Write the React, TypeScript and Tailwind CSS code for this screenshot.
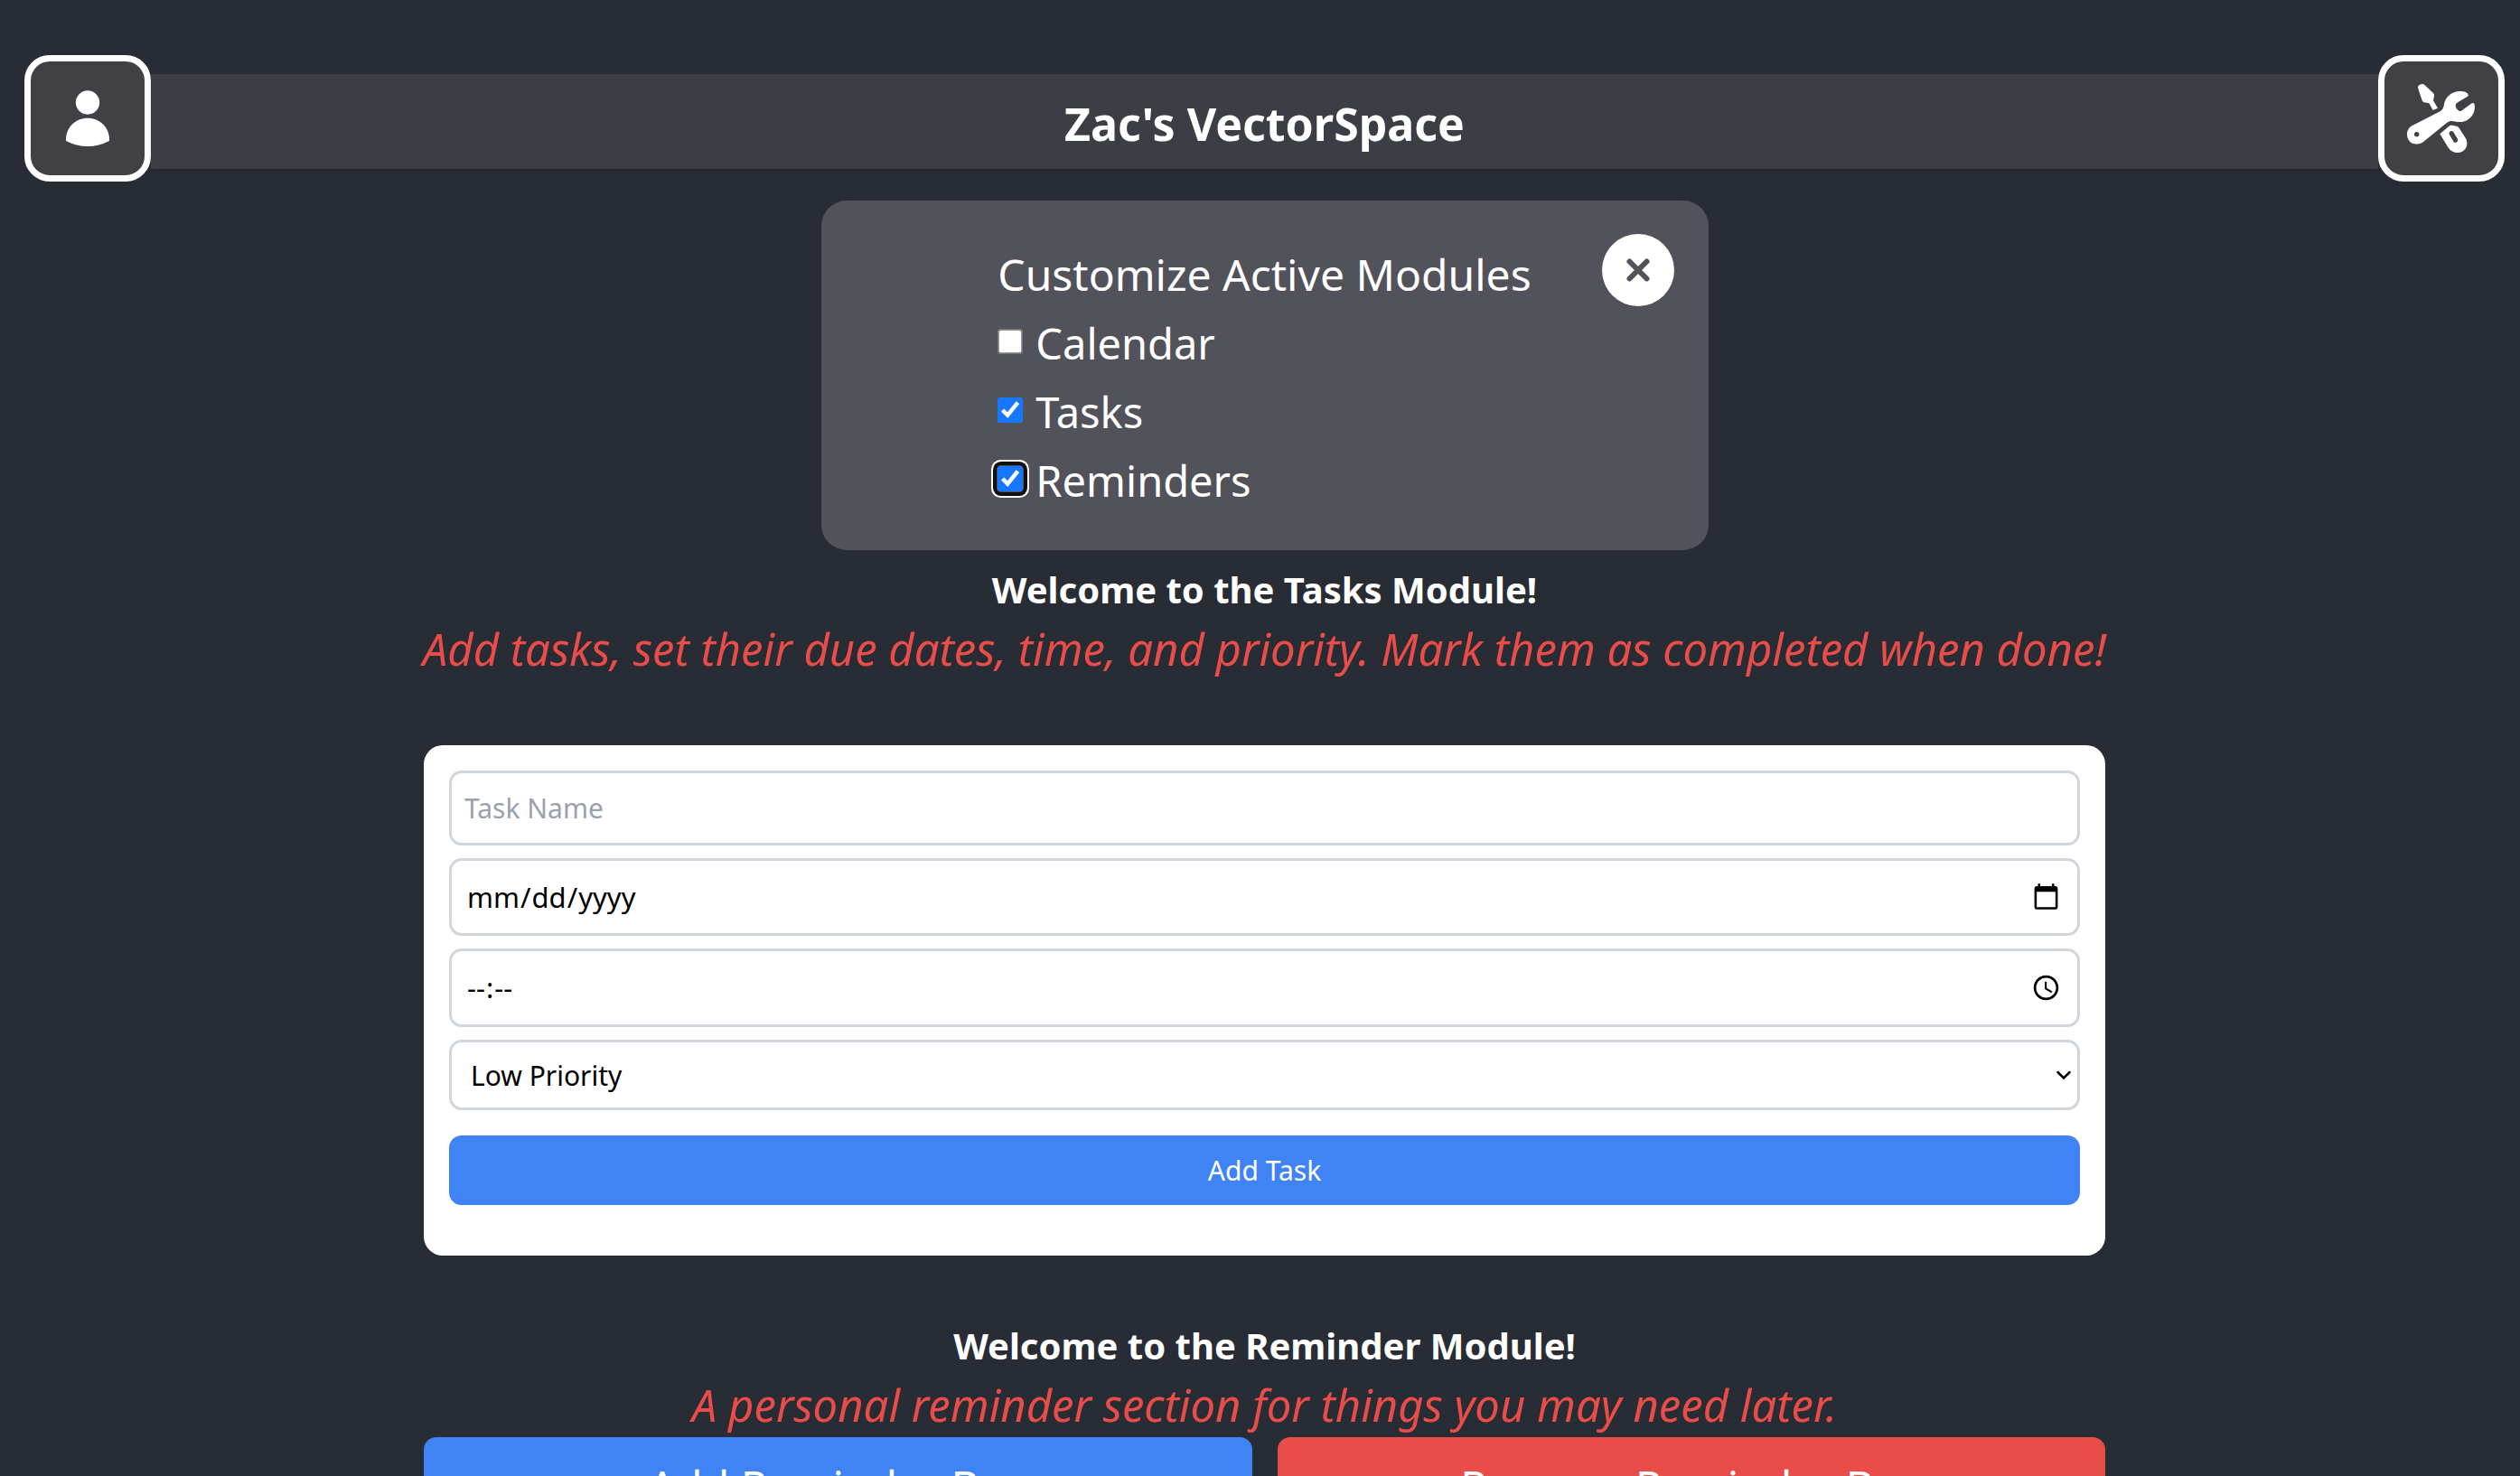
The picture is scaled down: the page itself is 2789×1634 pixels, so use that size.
import { useState } from "react";

const fieldClass =
  "block w-full rounded-[14px] border-[3px] border-gray-300 bg-white text-black placeholder:text-gray-400";

const pickerClass =
  "[&::-webkit-calendar-picker-indicator]:m-0 [&::-webkit-calendar-picker-indicator]:size-[33px] [&::-webkit-calendar-picker-indicator]:p-[2px]";

function UserIcon() {
  return (
    <svg viewBox="171 153 240 240" className="size-20" fill="currentColor" aria-hidden="true">
      <circle cx="291" cy="220.5" r="39.5" />
      <path d="M219 348v-5c0-40 32-71 72-71s72 31 72 71v5Q328 366 291 366 254 366 219 348Z" />
    </svg>
  );
}

function ToolsIcon() {
  return (
    <svg viewBox="66 33 240 240" className="size-20" fill="currentColor" fillRule="evenodd" aria-hidden="true">
      <path d="M88 178 182 130Q192 124 194 112C197 82 220 63 248 63C262 63 272 67 275 74Q276 78 272 81L238 101Q232 105 233 112Q234 121 242 127Q247 131 252 128L287 103Q294 99 296 107C301 138 278 164 250 165C236 166 226 161 216 162Q208 163 200 171L130 228C118 238 108 240 98 238C82 236 72 222 72 206C72 193 79 183 88 178ZM104 198a8 8 0 1 0 0 16a8 8 0 1 0 0-16Z" />
      <path d="M108 52Q107 45 113 42L121 39Q126 38 130 42L159 69Q163 73 162 78L159 94 174 119 158 126 145 103 128 100Q124 99 122 94Z" />
      <path d="M181 205 213 178Q217 175 222 176L237 179Q242 180 245 185L266 218C280 242 264 267 239 267C225 267 215 260 208 249ZM214 197Q209 202 213 208L227 231Q231 236 237 232Q243 228 240 222L226 199Q221 192 214 197Z" />
    </svg>
  );
}

function CornerButton({ label, children }: { label: string; children: React.ReactNode }) {
  return (
    <button
      type="button"
      aria-label={label}
      className="flex size-[140px] shrink-0 items-center justify-center rounded-[28px] border-[7px] border-white bg-[#404045] text-white"
    >
      {children}
    </button>
  );
}

function ModuleIntro({ title, text }: { title: string; text: string }) {
  return (
    <div className="text-center">
      <h2 className="text-[40px] leading-[60px] font-bold">{title}</h2>
      <p className="-mx-2 text-[49px] leading-[70px] text-[#e84d49] italic">{text}</p>
    </div>
  );
}

export default function App() {
  const [modules, setModules] = useState([
    { name: "Calendar", active: false, focused: false },
    { name: "Tasks", active: true, focused: false },
    { name: "Reminders", active: true, focused: true },
  ]);

  const toggle = (name: string) =>
    setModules((list) => list.map((m) => (m.name === name ? { ...m, active: !m.active } : m)));

  return (
    <div className="h-screen overflow-hidden bg-[#282c34] pt-[61px] pr-[17px] pl-[27px] font-['Noto_Sans',sans-serif] text-white">
      <header className="flex items-start">
        <CornerButton label="Profile">
          <UserIcon />
        </CornerButton>
        <div className="mt-[21px] flex h-[105px] flex-1 items-center justify-center bg-[#3c3e46] pt-1.5 shadow-md">
          <h1 className="text-[50px] font-bold">Zac's VectorSpace</h1>
        </div>
        <CornerButton label="Tools">
          <ToolsIcon />
        </CornerButton>
      </header>

      <main className="flex flex-col items-center">
        <section className="relative mt-[21px] flex w-[982px] max-w-full justify-center rounded-[28px] bg-[#52525b] pt-11 pb-[39px]">
          <div className="leading-[76px]">
            <h2 className="text-[48px]">Customize Active Modules</h2>
            {modules.map((m) => (
              <label key={m.name} className="flex items-center gap-[14px] text-[47px]">
                <span
                  className={
                    m.focused
                      ? "mb-1 flex rounded-[4px] shadow-[0_0_0_1px_#52525b,0_0_0_5px_#101010,0_0_0_7px_#ffffff]"
                      : "mb-1 flex"
                  }
                >
                  <input
                    type="checkbox"
                    checked={m.active}
                    onChange={() => toggle(m.name)}
                    className="size-4 accent-[#1677ff] [zoom:1.75]"
                  />
                </span>
                {m.name}
              </label>
            ))}
          </div>
          <button
            type="button"
            aria-label="Close"
            className="absolute top-[37px] right-[38px] flex size-20 items-center justify-center rounded-full bg-white text-[#52525b]"
          >
            <svg viewBox="0 0 28 28" className="size-7" stroke="currentColor" strokeWidth="6" strokeLinecap="round" aria-hidden="true">
              <path d="M4.5 4.5 23.5 23.5M23.5 4.5 4.5 23.5" />
            </svg>
          </button>
        </section>

        <div className="mt-[14px] w-[1861px] max-w-full">
          <ModuleIntro
            title="Welcome to the Tasks Module!"
            text="Add tasks, set their due dates, time, and priority. Mark them as completed when done!"
          />
          <form className="mt-[72px] rounded-[21px] bg-white px-7 pt-7 pb-14" onSubmit={(e) => e.preventDefault()}>
            <div className="flex flex-col gap-[14px]">
              <input
                type="text"
                placeholder="Task Name"
                aria-label="Task name"
                className={`${fieldClass} h-[83px] px-[14px] text-[30px]`}
              />
              <input
                type="date"
                aria-label="Due date"
                className={`${fieldClass} ${pickerClass} h-[86px] px-4 text-[31px]`}
              />
              <input
                type="time"
                aria-label="Due time"
                className={`${fieldClass} ${pickerClass} h-[87px] px-4 text-[31px] [&::-webkit-datetime-edit-ampm-field]:hidden`}
              />
              <div className="relative">
                <select
                  aria-label="Priority"
                  className={`${fieldClass} h-[78px] appearance-none pl-[21px] text-[30px]`}
                >
                  <option>Low Priority</option>
                  <option>Medium Priority</option>
                  <option>High Priority</option>
                </select>
                <svg
                  viewBox="0 0 18 12"
                  className="pointer-events-none absolute top-[33px] right-[9px] h-3 w-[18px]"
                  fill="none"
                  stroke="black"
                  strokeWidth="2.5"
                  strokeLinecap="round"
                  aria-hidden="true"
                >
                  <path d="M2.5 3 9 9.5 15.5 3" />
                </svg>
              </div>
            </div>
            <button type="submit" className="mt-7 h-[77px] w-full rounded-[14px] bg-[#4083f4] text-[30px]">
              Add Task
            </button>
          </form>
        </div>

        <div className="mt-[70px] w-[1861px] max-w-full">
          <ModuleIntro
            title="Welcome to the Reminder Module!"
            text="A personal reminder section for things you may need later."
          />
          <div className="mt-px flex gap-7 text-[48px] leading-[76px]">
            <button type="button" className="flex-1 rounded-[14px] bg-[#4083f4] py-4">
              Add Reminder Box
            </button>
            <button type="button" className="flex-1 rounded-[14px] bg-[#e84d49] py-4">
              Remove Reminder Box
            </button>
          </div>
        </div>
      </main>
    </div>
  );
}
